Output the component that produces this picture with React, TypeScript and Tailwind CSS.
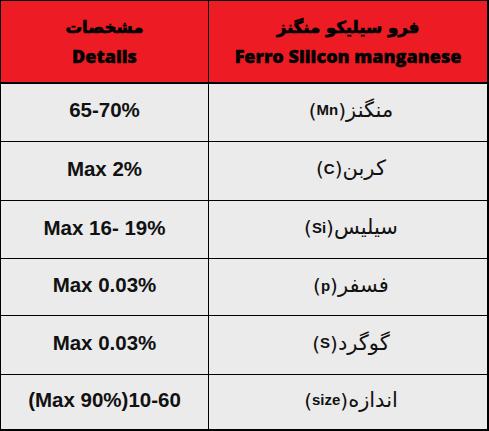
import React from "react";

const rows: { v: string; fa: string; en: string; h: string }[] = [
  { v: "65-70%", fa: "منگنز", en: "Mn", h: "h-[58px]" },
  { v: "Max 2%", fa: "کربن", en: "C", h: "h-[59px]" },
  { v: "Max 16- 19%", fa: "سیلیس", en: "Si", h: "h-[59px]" },
  { v: "Max 0.03%", fa: "فسفر", en: "p", h: "h-[57px]" },
  { v: "Max 0.03%", fa: "گوگرد", en: "S", h: "h-[59px]" },
  { v: "(Max 90%)10-60", fa: "اندازه", en: "size", h: "h-[54px]" },
];

export default function App() {
  return (
    <div className="w-[489px] h-[431px] bg-white">
      <div className="w-[489px] h-[431px] border-l border-t border-r-2 border-b-2 border-black flex flex-col bg-[#ebebeb]">
        <div className="h-[83px] flex border-b-2 border-black bg-[#ed1c24] text-black">
          <div className="w-[208px] border-r border-black flex flex-col items-center justify-center pt-[4px]">
            <div dir="rtl" className="font-['DejaVu_Sans',sans-serif] font-bold text-[16.5px] leading-[26px] [-webkit-text-stroke:0.7px_black]">مشخصات</div>
            <div className="font-['Open_Sans',sans-serif] font-extrabold text-[18px] leading-[30px] [-webkit-text-stroke:0.4px_black]">Details</div>
          </div>
          <div className="flex-1 flex flex-col items-center justify-center pt-[4px]">
            <div dir="rtl" className="font-['DejaVu_Sans',sans-serif] font-bold text-[16.5px] leading-[26px] [-webkit-text-stroke:0.7px_black]">فرو سیلیکو منگنز</div>
            <div className="font-['Open_Sans',sans-serif] font-extrabold text-[18px] leading-[30px] [-webkit-text-stroke:0.4px_black]">Ferro Silicon manganese</div>
          </div>
        </div>
        {rows.map((r, i) => (
          <div key={i} className={`${r.h} flex ${i < rows.length - 1 ? "border-b border-black" : ""}`}>
            <div className="w-[208px] border-r border-black flex items-center justify-center pb-[3px]">
              <span className="font-['Liberation_Sans',Arial,sans-serif] font-bold text-[20.5px] text-[#111]">{r.v}</span>
            </div>
            <div className="flex-1 flex items-center justify-center pb-[3px] pl-[6px]">
              <div dir="rtl" className="flex items-center text-[#111] font-['DejaVu_Sans',sans-serif]">
                <span className="text-[21px]">{r.fa}</span>
                <span dir="ltr" className="flex items-center text-[20px]">
                  <span>(</span>
                  <span className="font-['Liberation_Sans',Arial,sans-serif] font-bold text-[15px]">{r.en}</span>
                  <span>)</span>
                </span>
              </div>
            </div>
          </div>
        ))}
      </div>
    </div>
  );
}
